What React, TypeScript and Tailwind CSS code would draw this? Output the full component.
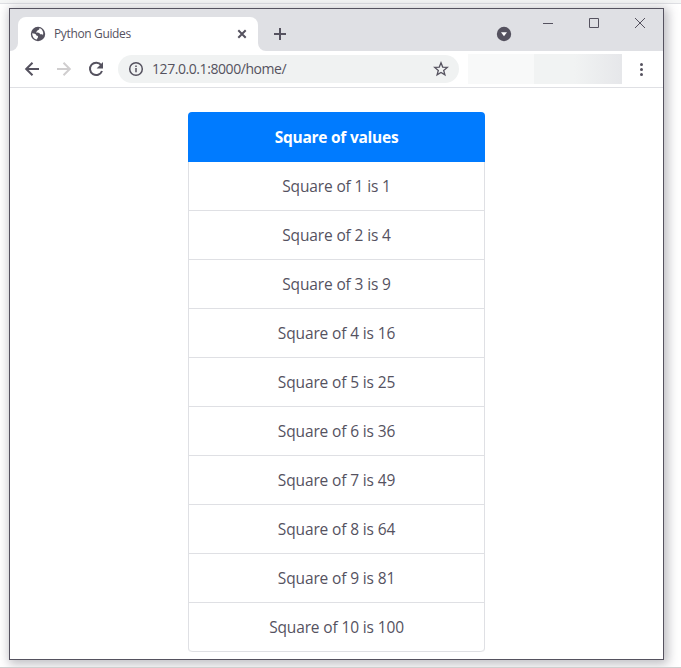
import React from "react";

const squares = [1, 2, 3, 4, 5, 6, 7, 8, 9, 10];

function TitleBar() {
  return (
    <div className="flex h-[42px] shrink-0 items-end bg-[#dfe0e4]">
      <div className="h-2 w-2 bg-white">
        <div className="h-2 w-2 rounded-br-lg bg-[#dfe0e4]" />
      </div>
      <div className="flex h-[34px] w-[240px] items-center rounded-t-lg bg-white pl-[12px] pr-[8px]">
        <svg width="16" height="16" viewBox="0 0 16 16" className="shrink-0">
          <circle cx="8" cy="8" r="7.2" fill="#55525f" />
          <path d="M9.4 2.1c.3 1.5-.6 1.9-1.8 2.1-.4 1.4-1.5 1.2-1.7 2.3 1.8 0 4 .1 4.2 1.8h1.7c.6 0 .9.5 1.2 1A5.7 5.7 0 0 0 9.4 2.1Z" fill="#fff" />
          <path d="M2.2 7.3c1.6.2 4.2.7 4.2 2.2 1.3.2 1.8.8 1.6 1.8-.2.8-1 1-1 2.3A5.8 5.8 0 0 1 2.2 7.3Z" fill="#fff" />
        </svg>
        <span className="ml-[8px] whitespace-nowrap text-[12px] leading-4 tracking-[-0.36px] text-[#55525f]">Python Guides</span>
        <svg width="16" height="16" viewBox="0 0 16 16" className="ml-auto">
          <path d="m4.3 4.3 7.4 7.4m0-7.4-7.4 7.4" stroke="#55525f" strokeWidth="2" />
        </svg>
      </div>
      <div className="h-2 w-2 bg-white">
        <div className="h-2 w-2 rounded-bl-lg bg-[#dfe0e4]" />
      </div>
      <div className="ml-[6px] flex h-[34px] items-center">
        <svg width="16" height="16" viewBox="0 0 16 16">
          <path d="M8 2v12M2 8h12" stroke="#55525f" strokeWidth="2" />
        </svg>
      </div>
      <div className="ml-auto flex h-[34px] items-center pr-[31px]">
        <svg width="16" height="16" viewBox="0 0 16 16">
          <circle cx="8" cy="8" r="7.2" fill="#55525f" />
          <path d="M5 6.2h6L8 10.2Z" fill="#fff" />
        </svg>
      </div>
      <div className="flex h-[42px] w-[120px] items-start pt-[8px]">
        <svg width="120" height="13" viewBox="0 0 120 13" fill="none" stroke="#55525f">
          <path d="M0 6.5h10" />
          <path d="M46.5 1.5h9v9h-9z" />
          <path d="m92 1 10 10m0-10-10 10" />
        </svg>
      </div>
    </div>
  );
}

function Toolbar() {
  return (
    <div className="flex h-[37px] shrink-0 items-center border-b border-[#dfe0e4] bg-white">
      <svg width="108" height="24" viewBox="0 0 108 24" fill="none" strokeWidth="2" className="shrink-0">
        <path d="M29 12H16m6.5-6.2L16.2 12l6.3 6.2" stroke="#55525f" />
        <path d="M47 12h13m-6.5-6.2 6.3 6.2-6.3 6.2" stroke="#d0cecf" />
        <path d="M91.2 8.2A6.2 6.2 0 1 0 92 14" stroke="#55525f" />
        <path d="M93 5v6.4h-6.4Z" fill="#55525f" />
      </svg>
      <div className="flex h-7 w-[341px] items-center rounded-full bg-[#f0f2f2] pl-[10px] pr-[10px]">
        <svg width="16" height="16" viewBox="0 0 16 16">
          <circle cx="8" cy="8" r="6.3" fill="none" stroke="#55525f" strokeWidth="1.5" />
          <path d="M7.25 7h1.5v4.3h-1.5zM7.25 4.5h1.5v1.5h-1.5z" fill="#55525f" />
        </svg>
        <span className="ml-[8px] whitespace-nowrap text-[14px] leading-5 tracking-[-0.43px] text-[#55525f]">127.0.0.1:8000/home/</span>
        <svg width="16" height="16" viewBox="0 0 16 16" className="ml-auto">
          <path d="m8 1.8 1.7 4.3 4.6.3-3.6 3 1.2 4.5L8 11.4l-3.9 2.5 1.2-4.5-3.6-3 4.6-.3Z" fill="none" stroke="#55525f" strokeWidth="1.3" />
        </svg>
      </div>
      <div className="mb-[1px] ml-[9px] flex h-[30px] w-[154px]">
        <div className="w-[66px] bg-[#f8f9f9]" />
        <div className="w-[40px] bg-[#f1f3f3]" />
        <div className="flex-1 bg-linear-to-r from-[#f1f3f3] to-[#e6e7ea]" />
      </div>
      <svg width="16" height="16" viewBox="0 0 16 16" fill="#55525f" className="ml-[11px]">
        <circle cx="8.5" cy="3.5" r="1.5" />
        <circle cx="8.5" cy="8.5" r="1.5" />
        <circle cx="8.5" cy="13.5" r="1.5" />
      </svg>
    </div>
  );
}

export default function App() {
  return (
    <div className="h-[668px] w-[681px] overflow-hidden border-b border-[#cfcfcf] bg-white pl-[9px] font-['Open_Sans','Noto_Sans',sans-serif]">
      <div className="-ml-[9px] h-[8px] border-t-[3px] border-[#f5f6f6] bg-white">
        <div className="h-px bg-[#dfe0e4]" />
      </div>
      <div className="flex h-[652px] w-[655px] flex-col border border-[#55525f] bg-white shadow-[2px_2px_10px_2px_rgba(85,82,95,0.38)]">
        <TitleBar />
        <Toolbar />
        <div className="flex-1 pt-6">
          <div className="ml-[178px] w-[297px] text-center text-[15.5px] leading-6">
            <div className="flex h-[50px] items-center justify-center rounded-t bg-[#007bff] font-bold tracking-[-0.25px] text-white">
              <span>Square of values</span>
            </div>
            <div className="rounded-b border-x border-[#dfe0e4] tracking-[-0.14px]">
              {squares.map((n) => (
                <div key={n} className="flex h-[49px] items-center justify-center border-b border-[#dfe0e4] text-[#55525f] last:rounded-b">
                  <span>{`Square of ${n} is ${n * n}`}</span>
                </div>
              ))}
            </div>
          </div>
        </div>
      </div>
    </div>
  );
}
